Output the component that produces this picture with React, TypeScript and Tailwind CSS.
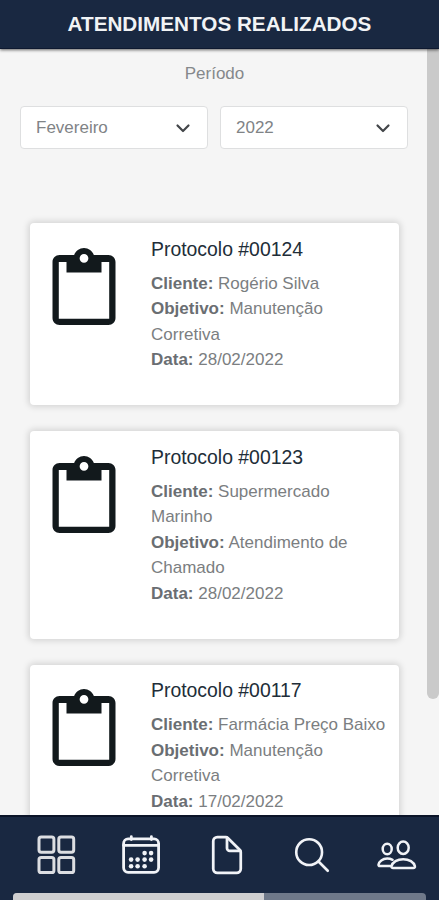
import { IoDocumentOutline, IoSearchOutline } from 'react-icons/io5';

const atendimentos = [
  { protocolo: '00124', cliente: 'Rogério Silva', objetivo: 'Manutenção Corretiva', data: '28/02/2022' },
  { protocolo: '00123', cliente: 'Supermercado Marinho', objetivo: 'Atendimento de Chamado', data: '28/02/2022' },
  { protocolo: '00117', cliente: 'Farmácia Preço Baixo', objetivo: 'Manutenção Corretiva', data: '17/02/2022' },
];

const ClipboardIcon = () => (
  <svg className="mt-3 h-[84px] w-[84px] shrink-0 text-[#12191c]" viewBox="0 0 24 24" fill="currentColor">
    <path
      fillRule="evenodd"
      d="M19 2h-4.18C14.4.84 13.3 0 12 0S9.6.84 9.18 2H5c-1.1 0-2 .9-2 2v16c0 1.1.9 2 2 2h14c1.1 0 2-.9 2-2V4c0-1.1-.9-2-2-2zm-7-.3a1.25 1.25 0 1 1 0 2.5 1.25 1.25 0 0 1 0-2.5zM19.2 20.2H4.8V4H7v3h10V4h2.2z"
    />
  </svg>
);

const GridIcon = () => (
  <svg className="h-11 w-11 text-[#dcdee2]" viewBox="0 0 44 44" fill="none" stroke="currentColor" strokeWidth="3">
    <rect x="4" y="4" width="14.9" height="15.2" rx="2.2" />
    <rect x="23.8" y="4" width="14.9" height="15.2" rx="2.2" />
    <rect x="4" y="24.4" width="14.9" height="15.2" rx="2.2" />
    <rect x="23.8" y="24.4" width="14.9" height="15.2" rx="2.2" />
  </svg>
);

const calendarDots = [
  [25, 20.5], [31.5, 20.5],
  [11.5, 27], [18, 27], [25, 27], [31.5, 27],
  [11.5, 33.7], [18, 33.7], [25, 33.7],
];

const CalendarIcon = () => (
  <svg className="h-11 w-11" viewBox="0 0 44 44" fill="none" stroke="currentColor" strokeWidth="2.8">
    <rect x="3.6" y="5.9" width="35" height="33.4" rx="4.5" />
    <path d="M3.6 12.4h35M11.3 3.6v3M31.4 3.6v3" strokeLinecap="round" />
    {calendarDots.map(([x, y]) => (
      <circle key={`${x}-${y}`} cx={x - 0.4} cy={y - 0.4} r="2.3" fill="currentColor" stroke="none" />
    ))}
  </svg>
);

const DocumentIcon = () => <IoDocumentOutline className="h-11 w-11" />;

const SearchIcon = () => <IoSearchOutline className="m-[1px] h-[42px] w-[42px]" />;

const PeopleIcon = () => (
  <svg className="h-11 w-11" viewBox="0 0 44 44" fill="none" stroke="currentColor" strokeWidth="2.5" strokeLinecap="round" strokeLinejoin="round">
    <ellipse cx="12.2" cy="16" rx="4.5" ry="5.2" />
    <ellipse cx="28.2" cy="14.8" rx="5.5" ry="6.2" />
    <path d="M17.6 26.8c-1.6-.8-3.4-1.2-5.4-1.2-4.6 0-8.2 2.8-8.7 6-.1.9.4 1.5 1.3 1.5h10.5" />
    <path d="M28.2 26.2c-6 0-10.6 3-11.7 6.9-.3 1.2.4 2 1.6 2h20.2c1.2 0 1.9-.8 1.6-2-1.1-3.9-5.7-6.9-11.7-6.9z" />
  </svg>
);

const navItems = [
  { name: 'inicio', icon: GridIcon },
  { name: 'agenda', icon: CalendarIcon },
  { name: 'documentos', icon: DocumentIcon },
  { name: 'busca', icon: SearchIcon },
  { name: 'clientes', icon: PeopleIcon },
];

const Select = ({ value }: { value: string }) => (
  <button className="flex h-[43px] w-[188px] items-center justify-between rounded-[4px] border border-[#dedfe0] bg-white pl-[15px] pr-4 text-[17px] text-[#808386]">
    <span>{value}</span>
    <svg className="h-4 w-4" viewBox="0 0 16 16" fill="none" stroke="#434649" strokeWidth="2.2" strokeLinecap="round" strokeLinejoin="round">
      <path d="M2.5 5.5l5.5 5.5 5.5-5.5" />
    </svg>
  </button>
);

const Card = ({ item }: { item: (typeof atendimentos)[number] }) => (
  <div className="flex shrink-0 rounded-[4px] bg-white pb-[32.5px] pl-3 pt-[12.5px] shadow-[0_0_6px_2px_rgba(0,0,0,0.13)]">
    <ClipboardIcon />
    <div className="ml-[25px] w-[240px] text-[17px] leading-[25.5px] text-[#7b7e81]">
      <h2 className="mb-[9px] text-[19.4px] leading-[26px] text-[#212d38]">Protocolo #{item.protocolo}</h2>
      <p>
        <b className="text-[#6a6e72]">Cliente:</b> {item.cliente}
      </p>
      <p>
        <b className="text-[#6a6e72]">Objetivo:</b> {item.objetivo}
      </p>
      <p>
        <b className="text-[#6a6e72]">Data:</b> {item.data}
      </p>
    </div>
  </div>
);

export default function App() {
  return (
    <div className="flex h-[900px] w-[439px] flex-col overflow-hidden bg-[#f5f5f5] font-['Liberation_Sans',Arial,sans-serif]">
      {/* Header */}
      <header className="z-10 flex h-[49px] shrink-0 items-center justify-center border-b border-[#0e1930] bg-[#192841] shadow-[0_1px_3px_rgba(0,0,0,0.6)]">
        <h1 className="text-[20.7px] font-bold text-[#f1f3f5]">ATENDIMENTOS REALIZADOS</h1>
      </header>

      <div className="flex min-h-0 flex-1">
        <main className="flex w-[427px] shrink-0 flex-col overflow-hidden">
          <div className="mt-3 pl-0.5 text-center text-[17px] leading-[25px] text-[#85888b]">Período</div>

          {/* Filtro de período */}
          <div className="mt-5 flex gap-3 pl-5">
            <Select value="Fevereiro" />
            <Select value="2022" />
          </div>

          {/* Lista */}
          <div className="mt-[74px] flex w-[399px] flex-col gap-[26px] pl-[30px]">
            {atendimentos.map((item) => (
              <Card key={item.protocolo} item={item} />
            ))}
          </div>
        </main>

        {/* Scrollbar */}
        <div className="w-3 shrink-0">
          <div className="h-[650px] rounded-b-full bg-[#cacaca]" />
        </div>
      </div>

      {/* Bottom nav */}
      <nav className="z-10 flex h-[85px] shrink-0 flex-col justify-between border-t-2 border-[#0b1428] bg-[#192841]">
        <div className="flex gap-[41px] pl-[34.5px] pt-[15.5px] text-[#f1f3f7]">
          {navItems.map(({ name, icon: Icon }) => (
            <div key={name} className="h-11 w-11 shrink-0">
              <Icon />
            </div>
          ))}
        </div>
        <div className="mx-[13px] h-[7px] overflow-hidden rounded-t-[4px] bg-[#6f798a]">
          <div className="h-full w-[251px] bg-[#cfcfd1]" />
        </div>
      </nav>
    </div>
  );
}
